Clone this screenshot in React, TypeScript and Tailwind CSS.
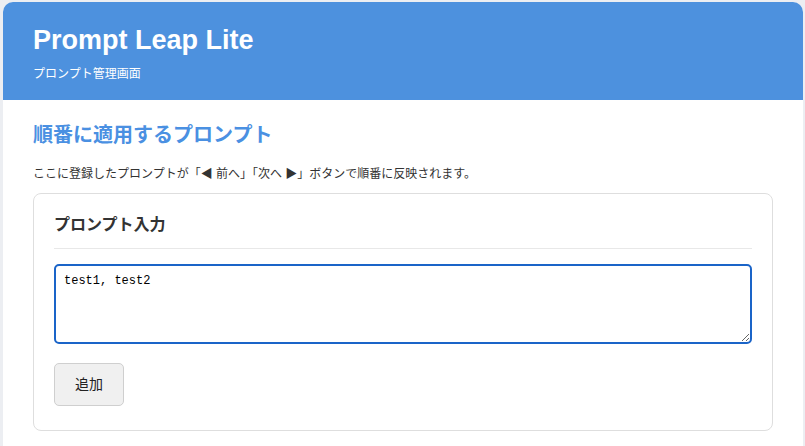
import { useEffect, useRef } from "react";

const jp = { fontFamily: '"Liberation Sans", "Noto Sans CJK JP", sans-serif' };

export default function App() {
  const ref = useRef<HTMLTextAreaElement>(null);

  useEffect(() => {
    const el = ref.current;
    if (el) {
      el.focus();
      el.setSelectionRange(el.value.length, el.value.length);
    }
  }, []);

  return (
    <div className="min-h-screen w-[805px] bg-[#eceef2] pl-[3px] pt-[2px]" style={jp}>
      <div className="min-h-[460px] w-[800px] overflow-hidden rounded-t-[10px] bg-white pb-[20px]">
        <header className="h-[98px] bg-[#4d91de] px-[30px] pt-[22px] text-white">
          <h1 className="text-[27px] font-bold leading-[32px]">Prompt Leap Lite</h1>
          <p className="mt-[10px] text-[12px] leading-[16px]">プロンプト管理画面</p>
        </header>

        <main className="px-[30px] pt-[22px]">
          <h2 className="text-[20px] font-bold leading-[26px] text-[#4a90e2]">順番に適用するプロンプト</h2>
          <p className="mt-[18px] text-[12px] leading-[16px] text-[#333]">
            ここに登録したプロンプトが「◀ 前へ」「次へ ▶」ボタンで順番に反映されます。
          </p>

          <section className="mt-[11px] w-[740px] rounded-lg border border-[#dedede] px-[20px] pb-[24px] pt-[21px]">
            <h3 className="border-b border-[#e8e8e8] pb-[13px] text-[16px] font-bold leading-[20px] text-[#333]">
              プロンプト入力
            </h3>
            <textarea
              ref={ref}
              defaultValue="test1, test2"
              className="mt-[15px] block h-[80px] w-[698px] rounded-[5px] border-2 border-[#1a64c8] px-[8px] py-[7px] text-[12px] leading-[16px] text-black outline-none"
              style={{ fontFamily: '"Liberation Mono", monospace' }}
            />
            <button className="mt-[19px] h-[43px] w-[70px] rounded-[5px] border border-[#cfcfcf] bg-[#f0f0f0] text-[14px] text-[#222]">
              追加
            </button>
          </section>
        </main>
      </div>
    </div>
  );
}
